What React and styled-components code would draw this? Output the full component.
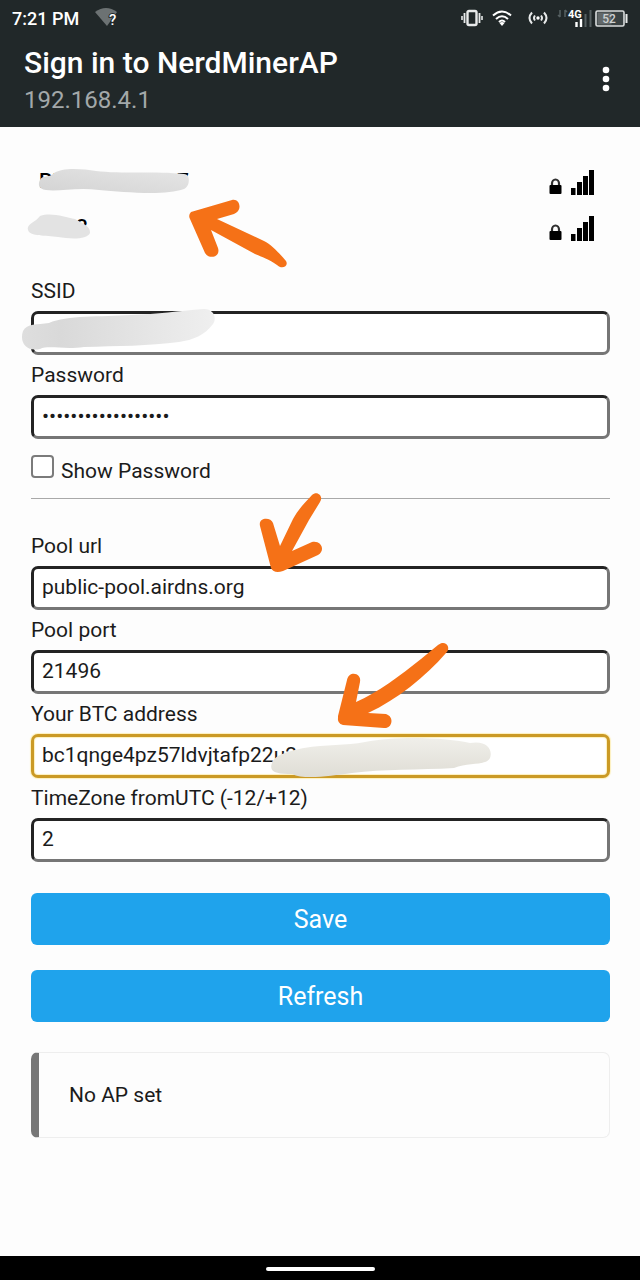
import React, { useState } from "react";
import styled, { createGlobalStyle, css } from "styled-components";

const GlobalStyle = createGlobalStyle`
  *, *::before, *::after { box-sizing: border-box; }
  body {
    margin: 0;
    background: #fdfdfd;
    color: #1b1b1b;
    font-family: Roboto, "Liberation Sans", sans-serif;
  }
`;

const Screen = styled.div`
  display: flex;
  flex-direction: column;
  min-height: 100vh;
`;

const TopArea = styled.header`
  background: #212829;
  color: #fff;
`;

const StatusBar = styled.div`
  display: flex;
  align-items: center;
  justify-content: space-between;
  height: 36px;
  padding: 0 12px;
  font-size: 18px;
  font-weight: 500;
`;

const StatusGroup = styled.div`
  display: flex;
  align-items: center;
  gap: ${(p) => p.$gap}px;
`;

const TitleBar = styled.div`
  display: flex;
  align-items: center;
  justify-content: space-between;
  height: 91px;
  padding: 4px 22px 6px 24px;
`;

const Title = styled.h1`
  margin: 0;
  font-size: 30px;
  line-height: 38px;
  font-weight: 500;
`;

const Address = styled.p`
  margin: 0;
  color: #a3a8a9;
  font-size: 24px;
  line-height: 36px;
`;

const MenuButton = styled.button`
  display: flex;
  padding: 0 8px 4px;
  border: 0;
  background: none;
  color: #fff;
`;

const Content = styled.main`
  flex: 1;
  padding: 33px 30px 40px 31px;
`;

const Networks = styled.div`
  position: relative;
  margin-bottom: 19px;
`;

const NetworkRow = styled.div`
  position: relative;
  display: flex;
  align-items: center;
  justify-content: space-between;
  height: 46px;
  padding: 0 16px 0 8px;
`;

const NetworkLink = styled.a`
  display: flex;
  justify-content: space-between;
  width: ${(p) => p.$width}px;
  padding-bottom: 4px;
  color: #000;
  font-size: 21px;
  font-weight: 500;
  line-height: 24px;
  text-decoration: none;
`;

const Overlay = styled.svg`
  position: absolute;
  z-index: ${(p) => p.$layer || 1};
  left: ${(p) => p.$x}px;
  top: ${(p) => p.$y}px;
  pointer-events: none;
`;

const FieldBox = styled.div`
  position: relative;
`;

const Label = styled.label`
  display: block;
  font-size: 21px;
  line-height: 40px;
`;

const Input = styled.input`
  display: block;
  width: 100%;
  height: 44px;
  padding: 0 8px 2px;
  border: 3px solid;
  border-color: #232323 #767676 #767676 #232323;
  border-radius: 7px;
  outline: 0;
  background: #fff;
  color: #1b1b1b;
  font: 21px Roboto, "Liberation Sans", sans-serif;
  ${(p) =>
    p.$active &&
    css`
      border-color: #cb9a25;
      box-shadow: 0 0 1px 1px #fdf0bd, inset 0 0 1px 1px #fdf0bd;
    `}
`;

const CheckRow = styled.div`
  display: flex;
  align-items: flex-start;
  gap: 7px;
  height: 60px;
  padding-top: 16px;
  border-bottom: 1px solid #a9a9a9;
`;

const CheckBox = styled.input`
  appearance: none;
  width: 23px;
  height: 23px;
  margin: 0;
  border: 2px solid #7b7b7b;
  border-radius: 4px;
  background: #fff;
  &:checked { background: #1fa3ec; }
`;

const CheckLabel = styled.label`
  font-size: 21px;
  line-height: 32px;
`;

const PoolSettings = styled.section`
  padding: 27px 0 31px;
`;

const Actions = styled.div`
  display: grid;
  gap: 25px;
  margin-bottom: 30px;
`;

const ActionButton = styled.button`
  height: 52px;
  padding: 0;
  border: 0;
  border-radius: 6px;
  background: #1fa3ec;
  color: #fff;
  font: 25px Roboto, "Liberation Sans", sans-serif;
`;

const Message = styled.div`
  padding: 30px;
  border: 1px solid #eee;
  border-left: 8px solid #777;
  border-radius: 7px;
  font-size: 21px;
  line-height: 24px;
`;

const NavBar = styled.footer`
  display: flex;
  align-items: center;
  justify-content: center;
  height: 24px;
  padding-top: 2px;
  background: #000;
`;

const HomeHandle = styled.div`
  width: 109px;
  height: 4px;
  border-radius: 2px;
  background: #fff;
`;

const ARROW = "#f57117";

const WifiUnknown = () => (
  <svg width="24" height="20" viewBox="0 0 24 20">
    <path d="M0 4Q11-4 22 4L12 18Z" fill="#6c7273" />
    <text x="14" y="17" fontSize="15" fontWeight="500" fill="#fff" stroke="#212829" strokeWidth="2" paintOrder="stroke">?</text>
  </svg>
);

const VibrateIcon = () => (
  <svg width="22" height="18" viewBox="0 0 22 18" fill="none" stroke="#e8eaea">
    <rect x="6.5" y="2" width="9" height="14" rx="1.5" strokeWidth="2.4" />
    <path d="M3.5 4v10M18.5 4v10" strokeWidth="1.8" />
    <path d="M1 7v4M21 7v4" strokeWidth="1.6" />
  </svg>
);

const WifiIcon = () => (
  <svg width="20" height="18" viewBox="0 0 20 18" fill="none" stroke="#fff" strokeWidth="2">
    <path d="M1 6.5Q10-1.500 19 6.5M4 10Q10 4.5 16 10M7 13Q10 10 13 13" />
    <path d="M7.500 14Q10 12 12.500 14L10 17Z" fill="#fff" stroke="none" />
  </svg>
);

const HotspotIcon = () => (
  <svg width="20" height="14" viewBox="0 0 20 14" fill="none" stroke="#e8eaea" strokeWidth="2">
    <path d="M4 1.500Q-1 7 4 12.500M16 1.500Q21 7 16 12.500M7 4.500Q5 7 7 9.500M13 4.500Q15 7 13 9.500" />
    <circle cx="10" cy="7" r="1.7" fill="#fff" stroke="none" />
  </svg>
);

const MobileIcon = () => (
  <svg width="36" height="20" viewBox="0 0 36 20">
    <path d="M4 2v7M2 7l2 2M9 9V2M9 2l2 2" stroke="#566062" strokeWidth="1.500" fill="none" />
    <path d="M29.500 6v13M34.500 2v17" stroke="#576062" strokeWidth="2" />
    <text x="12" y="10" fontSize="11" fontWeight="700" fill="#fff">4G</text>
    <path d="M20.500 14v5M25 11v8" stroke="#fff" strokeWidth="2.400" />
  </svg>
);

const BatteryIcon = () => (
  <svg width="33" height="17" viewBox="0 0 33 17">
    <rect x="1" y="1" width="28" height="15" rx="1.500" fill="#394142" stroke="#d9dcdc" strokeWidth="1.600" />
    <rect x="2.500" y="2.500" width="14" height="12" fill="#626869" />
    <path d="M31.500 4v9" stroke="#e8eaea" strokeWidth="2" />
    <text x="14" y="13" fontSize="12" textAnchor="middle" fill="#cfd2d2">52</text>
  </svg>
);

const Dots = () => (
  <svg width="8" height="26" viewBox="0 0 8 26" fill="currentColor">
    <circle cx="4" cy="4" r="3.300" />
    <circle cx="4" cy="13" r="3.300" />
    <circle cx="4" cy="22" r="3.300" />
  </svg>
);

const SignalIcon = () => (
  <svg width="45" height="26" viewBox="0 0 45 26">
    <path d="M3 17v-3.500a3.500 4 0 0 1 7 0v3.500" fill="none" stroke="#303030" strokeWidth="2.200" />
    <rect x="0.500" y="15" width="12" height="9" rx="1" fill="#000" />
    <path d="M22 18h4.500v7h-4.500zM28 12h5v13h-5zM34 6h5v19h-5zM40 0h5v25h-5z" fill="#000" />
  </svg>
);

function Field({ id, label, children, ...rest }) {
  return (
    <FieldBox>
      <Label htmlFor={id}>{label}</Label>
      <Input id={id} name={id} {...rest} />
      {children}
    </FieldBox>
  );
}

export default function App() {
  const [shown, setShown] = useState(false);
  return (
    <Screen>
      <GlobalStyle />
      <TopArea>
        <StatusBar>
          <StatusGroup $gap={16}>
            <span>7:21 PM</span>
            <WifiUnknown />
          </StatusGroup>
          <StatusGroup $gap={16}>
            <StatusGroup $gap={9}>
              <VibrateIcon />
              <WifiIcon />
            </StatusGroup>
            <StatusGroup $gap={8}>
              <HotspotIcon />
              <StatusGroup $gap={3}>
                <MobileIcon />
                <BatteryIcon />
              </StatusGroup>
            </StatusGroup>
          </StatusGroup>
        </StatusBar>
        <TitleBar>
          <div>
            <Title>Sign in to NerdMinerAP</Title>
            <Address>192.168.4.1</Address>
          </div>
          <MenuButton type="button" aria-label="More options"><Dots /></MenuButton>
        </TitleBar>
      </TopArea>

      <Content as="form" onSubmit={(e) => e.preventDefault()}>
        <Networks>
          <NetworkRow>
            <NetworkLink href="#ssid" $width={150}><span>Pl</span><span>7</span></NetworkLink>
            <SignalIcon />
            <Overlay $x={6} $y={6} width="156" height="30" viewBox="37 166 156 30">
              <defs>
                <linearGradient id="smudgeA" x1="0" x2="1" y1="1" y2="0">
                  <stop offset="0" stopColor="#d3d3d3" />
                  <stop offset="1" stopColor="#e6e6e6" />
                </linearGradient>
              </defs>
              <path d="M40 180C42 175 48 178 53 174C62 167 82 169 96 171C120 174 157 171 184 174C191 174 190 187 184 189C165 196 124 192 99 190C77 187 58 192 46 190C38 189 38 184 40 180Z" fill="url(#smudgeA)" />
            </Overlay>
          </NetworkRow>
          <NetworkRow>
            <NetworkLink href="#ssid" $width={49}><span /><span>3</span></NetworkLink>
            <SignalIcon />
            <Overlay $x={-5} $y={6} width="67" height="29" viewBox="26 212 67 29">
              <path d="M40 216C51 212 65 217 75 219C80 222 91 226 90 233C87 240 70 239 58 237C46 235 30 237 28 230C26 224 36 222 40 216Z" fill="#e3e3e3" />
            </Overlay>
          </NetworkRow>
          <Overlay $layer={2} $x={154} $y={35} width="110" height="80" viewBox="185 195 110 80">
            <path d="M191 212L232 200C240 198 243 211 234 214L217 219L264 241C272 245 280 254 286 261C289 266 282 270 277 265C269 259 262 257 255 254L211 230L218 248C221 257 209 260 205 253L190 219Q188 215 191 212Z" fill={ARROW} />
          </Overlay>
        </Networks>

        <Field id="ssid" label="SSID" type="text">
          <Overlay $x={-13} $y={34} width="202" height="50" viewBox="18 305 202 50">
            <defs>
              <linearGradient id="smudgeB">
                <stop offset="0" stopColor="#dedede" />
                <stop offset="0.2" stopColor="#d9d9d9" />
                <stop offset="1" stopColor="#efefef" />
              </linearGradient>
            </defs>
            <path d="M23 331C27 323 37 325 49 323C67 315 100 317 131 315C159 314 177 311 204 309C214 309 217 318 213 324C205 335 193 340 179 342C149 346 117 346 84 347C64 350 49 345 40 349C27 352 19 343 23 331Z" fill="url(#smudgeB)" />
          </Overlay>
        </Field>
        <Field id="password" label="Password" type={shown ? "text" : "password"} defaultValue="passwordpassword12" />
        <CheckRow>
          <CheckBox id="show" type="checkbox" checked={shown} onChange={() => setShown(!shown)} />
          <CheckLabel htmlFor="show">Show Password</CheckLabel>
        </CheckRow>

        <PoolSettings>
          <Field id="pool-url" label="Pool url" type="text" defaultValue="public-pool.airdns.org">
            <Overlay $layer={2} $x={224} $y={-38} width="75" height="92" viewBox="255 488 75 92">
              <path d="M260 526C258 517 271 517 273 523L280 546L293 519C299 508 306 502 312 495C317 490 324 496 320 502L309 520L292 551L312 542C321 540 326 550 318 555L283 571Q274 574 271 568Z" fill={ARROW} />
            </Overlay>
          </Field>
          <Field id="pool-port" label="Pool port" type="text" defaultValue="21496" />
          <Field id="btc" label="Your BTC address" type="text" $active defaultValue="bc1qnge4pz57ldvjtafp22u2">
            <Overlay $x={237} $y={41} width="228" height="44" viewBox="268 735 228 44">
              <defs>
                <linearGradient id="smudgeC" x1="0" x2="0" y1="0" y2="1">
                  <stop offset="0" stopColor="#f0efea" />
                  <stop offset="1" stopColor="#dfddd5" />
                </linearGradient>
              </defs>
              <path d="M272 763C274 755 289 751 304 748C326 744 346 746 365 742C399 735 450 738 470 743C487 740 493 750 490 758C486 766 469 762 454 768C419 770 383 769 352 773C330 776 304 780 292 774C279 774 268 773 272 763Z" fill="url(#smudgeC)" />
            </Overlay>
            <Overlay $layer={2} $x={299} $y={-58} width="125" height="96" viewBox="330 636 125 96">
              <path d="M347 680C349 670 362 673 360 682L356 702C377 693 401 675 421 659L438 645C445 639 452 647 446 653C425 677 398 699 368 713L386 714C395 717 392 729 384 728L343 725Q337 724 338 716Z" fill={ARROW} />
            </Overlay>
          </Field>
          <Field id="timezone" label="TimeZone fromUTC (-12/+12)" type="text" defaultValue="2" />
        </PoolSettings>

        <Actions>
          <ActionButton type="submit">Save</ActionButton>
          <ActionButton type="button">Refresh</ActionButton>
        </Actions>
        <Message>No AP set</Message>
      </Content>
      <NavBar><HomeHandle /></NavBar>
    </Screen>
  );
}
